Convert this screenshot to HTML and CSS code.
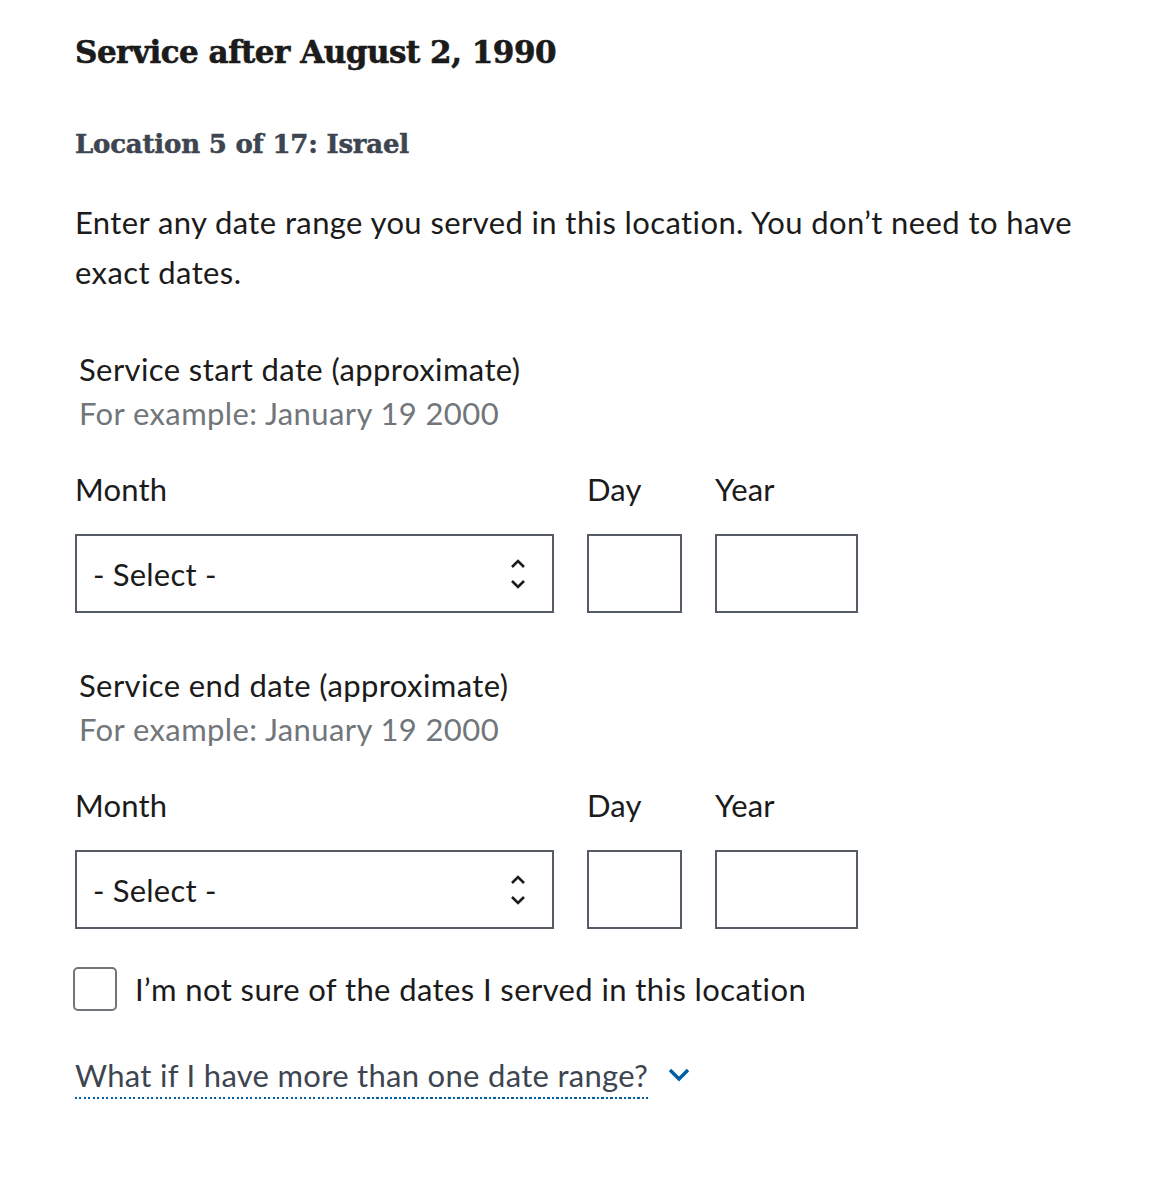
FILE: index.html
```html
<!DOCTYPE html>
<html lang="en">
<head>
<meta charset="utf-8">
<title>Service after August 2, 1990</title>
<link rel="stylesheet" href="styles.css">
</head>
<body>
<main class="page">
  <h1 class="title">Service after August 2, 1990</h1>
  <h2 class="subtitle">Location 5 of 17: Israel</h2>
  <p class="intro">Enter any date range you served in this location. You don’t need to have exact dates.</p>

  <fieldset class="date-group">
    <legend class="legend">Service start date (approximate)<span class="hint">For example: January 19 2000</span></legend>
    <div class="date-fields">
      <div class="field field-month">
        <label class="field-label">Month</label>
        <div class="select">
          <span>- Select -</span>
          <svg class="updown" width="16" height="30" viewBox="0 0 16 30"><path d="M2 8 L8 2 L14 8" fill="none" stroke="#1b1b1b" stroke-width="2.6"/><path d="M2 22 L8 28 L14 22" fill="none" stroke="#1b1b1b" stroke-width="2.6"/></svg>
        </div>
      </div>
      <div class="field field-day">
        <label class="field-label">Day</label>
        <div class="box"></div>
      </div>
      <div class="field field-year">
        <label class="field-label">Year</label>
        <div class="box"></div>
      </div>
    </div>
  </fieldset>

  <fieldset class="date-group second">
    <legend class="legend">Service end date (approximate)<span class="hint">For example: January 19 2000</span></legend>
    <div class="date-fields">
      <div class="field field-month">
        <label class="field-label">Month</label>
        <div class="select">
          <span>- Select -</span>
          <svg class="updown" width="16" height="30" viewBox="0 0 16 30"><path d="M2 8 L8 2 L14 8" fill="none" stroke="#1b1b1b" stroke-width="2.6"/><path d="M2 22 L8 28 L14 22" fill="none" stroke="#1b1b1b" stroke-width="2.6"/></svg>
        </div>
      </div>
      <div class="field field-day">
        <label class="field-label">Day</label>
        <div class="box"></div>
      </div>
      <div class="field field-year">
        <label class="field-label">Year</label>
        <div class="box"></div>
      </div>
    </div>
  </fieldset>

  <div class="check-row">
    <span class="checkbox"></span>
    <span class="check-label">I’m not sure of the dates I served in this location</span>
  </div>

  <div class="more">
    <span class="more-link">What if I have more than one date range?</span>
    <svg class="chev" width="24" height="16" viewBox="0 0 24 16"><path d="M3 3 L12 12 L21 3" fill="none" stroke="#005ea2" stroke-width="3.4"/></svg>
  </div>
</main>
</body>
</html>
```

FILE: styles.css
```css
* { box-sizing: border-box; }
html, body { margin: 0; padding: 0; background: #fff; }
body {
  font-family: Lato, "Open Sans", sans-serif;
  color: #1b1b1b;
}
.page {
  padding: 30px 0 0 75px;
}
.title {
  font-family: "DejaVu Serif", serif;
  font-weight: bold;
  font-size: 31px;
  letter-spacing: -0.5px;
  line-height: 44px;
  margin: 0 0 50px 0;
  color: #1b1b1b;
  -webkit-text-stroke: 0.6px #1b1b1b;
}
.subtitle {
  font-family: "DejaVu Serif", serif;
  font-weight: bold;
  font-size: 26px;
  letter-spacing: -0.2px;
  line-height: 40px;
  margin: 0 0 33px 0;
  color: #3d4551;
  -webkit-text-stroke: 0.5px #3d4551;
}
.intro {
  font-size: 31px;
  line-height: 50px;
  margin: 0 0 50px 0;
  width: 1030px;
  letter-spacing: 0.4px;
}
.date-group {
  border: 0;
  margin: 0;
  padding: 0;
}
.legend {
  padding: 0 0 0 4px;
  font-size: 31px;
  line-height: 44px;
  letter-spacing: 0.4px;
}
.hint {
  display: block;
  color: #71767a;
}
.date-fields {
  display: flex;
  gap: 33px;
  margin-top: 32px;
}
.field-label {
  display: block;
  font-size: 31px;
  line-height: 44px;
  letter-spacing: 0.2px;
  margin-bottom: 23px;
}
.select {
  width: 479px;
  height: 79px;
  border: 2px solid #565c65;
  display: flex;
  align-items: center;
  justify-content: space-between;
  padding: 0 26px 0 16px;
  font-size: 31px;
  letter-spacing: 0.2px;
}
.updown { display: block; }
.field-day .box { width: 95px; height: 79px; border: 2px solid #565c65; }
.field-year .box { width: 143px; height: 79px; border: 2px solid #565c65; }
.second { margin-top: 50px; }
.check-row {
  display: flex;
  align-items: center;
  gap: 18px;
  margin-top: 38px;
  margin-left: -2px;
}
.checkbox {
  flex: none;
  width: 44px;
  height: 44px;
  border: 2px solid #71767a;
  border-radius: 5px;
}
.check-label {
  font-size: 31px;
  line-height: 44px;
  letter-spacing: 0.4px;
}
.more {
  display: flex;
  align-items: center;
  gap: 19px;
  margin-top: 44px;
}
.more-link {
  font-size: 31px;
  color: #3d4551;
  letter-spacing: 0.3px;
  line-height: 40px;
  padding-bottom: 4px;
  background-image: repeating-linear-gradient(to right, #005ea2 0 2px, transparent 2px 4.5px);
  background-size: 100% 2px;
  background-position: left bottom;
  background-repeat: no-repeat;
}
.chev { display: block; margin-top: -4px; }
```
